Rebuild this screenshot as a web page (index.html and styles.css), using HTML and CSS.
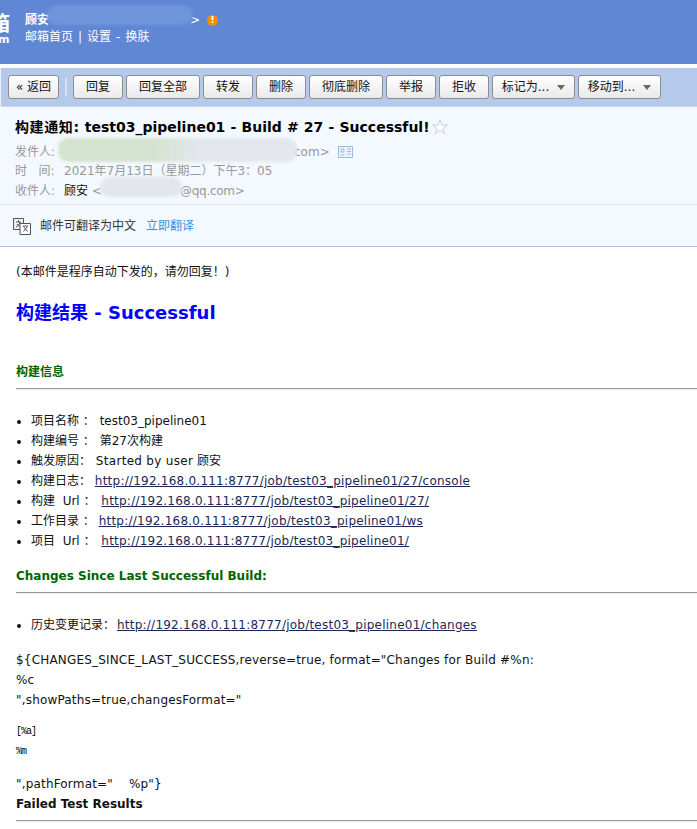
FILE: index.html
```html
<!DOCTYPE html>
<html lang="zh">
<head>
<meta charset="utf-8">
<title>构建通知</title>
<link rel="stylesheet" href="styles.css">
</head>
<body>
<header class="top">
  <div class="logo"><span class="logo-main">箱</span><span class="logo-sub">m</span></div>
  <div class="account">
    <div class="acct-line"><b class="acct-name">顾安</b><span class="acct-mail">&gt;</span>
      <span class="alert">!</span>
    </div>
    <div class="acct-links">邮箱首页<span class="pipe">|</span>设置<span class="dash">-</span>换肤</div>
    <div class="blur blur-acct"></div>
  </div>
</header>
<nav class="toolbar">
  <button class="btn back">« 返回</button>
  <span class="sep"></span>
  <button class="btn w-reply">回复</button>
  <button class="btn w-all">回复全部</button>
  <button class="btn w-reply">转发</button>
  <button class="btn w-del">删除</button>
  <button class="btn w-wipe">彻底删除</button>
  <button class="btn w-reply">举报</button>
  <button class="btn w-reply">拒收</button>
  <button class="btn w-menu">标记为...<i class="caret"></i></button>
  <button class="btn w-menu">移动到...<i class="caret"></i></button>
</nav>
<section class="mailhead">
  <div class="meta">
    <h1 class="subject"><span class="subj-text"><span class="subj-cn">构建通知:</span> test03_pipeline01 - Build # 27 - Successful!</span><svg class="star" width="16" height="16" viewBox="0 0 16 16"><path d="M8 1l2 5h5.300l-4.300 3.300 1.700 5.400L8 11.400l-4.700 3.300L5 9.300.7 6H6z" fill="#fff" stroke="#c9ced6"/></svg></h1>
    <div class="row row-first"><span class="lbl">发件人:</span><span class="from">com&gt;</span><svg class="card" width="15" height="12" viewBox="0 0 15 12"><rect x=".5" y=".5" width="14" height="11" fill="#eef4fc" stroke="#9dbbdc"/><path d="M3 3h3v3H3zM2.500 9h4M9 3h4M9 5.500h4M9 8h4" fill="none" stroke="#9dbbdc"/></svg></div>
    <div class="row"><span class="lbl">时&nbsp;&nbsp;&nbsp;间:</span><span class="time">2021年7月13日（星期二）下午3：05</span></div>
    <div class="row"><span class="lbl">收件人:</span><span class="name">顾安</span><span class="to">&lt;</span><span class="to to-mail">@qq.com&gt;</span></div>
    <div class="blur blur-from"></div>
    <div class="blur blur-to"></div>
  </div>
  <div class="translate">
    <svg width="20" height="20" viewBox="0 0 20 20" class="tr-icon"><path d="M.5 2.500h10v11H.5z" fill="#f2f2f2" stroke="#555"/><path d="M7 7.500h10.500v11H7z" fill="#fff" stroke="#555"/><path d="M3 6h5M5.500 4v2M7 6c-.5 2.500-2 4-4 5M4 8c1 1.500 2 2.300 3 2.800M10 10h5M10.500 10.500l4 5M14.500 10.500l-4 5" fill="none" stroke="#555"/></svg>
    <span>邮件可翻译为中文</span><a class="tr-link">立即翻译</a>
  </div>
</section>
<main class="body">
  <p class="notice">(本邮件是程序自动下发的，请勿回复！)</p>
  <h2 class="result">构建结果 - Successful</h2>
  <h3 class="sec sec-first">构建信息</h3>
  <hr class="rule">
  <ul class="list">
    <li>项目名称 ： <span class="val">test03_pipeline01</span></li>
    <li>构建编号 ： <span class="val">第27次构建</span></li>
    <li>触发原因： <span class="val latin">Started by user</span> 顾安</li>
    <li>构建日志： <a>http://192.168.0.111:8777/job/test03_pipeline01/27/console</a></li>
    <li class="url">构建 &nbsp;Url ： <a>http://192.168.0.111:8777/job/test03_pipeline01/27/</a></li>
    <li>工作目录 ： <a>http://192.168.0.111:8777/job/test03_pipeline01/ws</a></li>
    <li class="url">项目 &nbsp;Url ： <a>http://192.168.0.111:8777/job/test03_pipeline01/</a></li>
  </ul>
  <h3 class="sec sec-changes">Changes Since Last Successful Build:</h3>
  <hr class="rule">
  <ul class="list list-hist">
    <li class="hist">历史变更记录：<a>http://192.168.0.111:8777/job/test03_pipeline01/changes</a></li>
  </ul>
  <div class="text">${CHANGES_SINCE_LAST_SUCCESS,reverse=true, format="Changes for Build #%n:<br>%c<br>",showPaths=true,changesFormat="</div>
  <pre class="mono">[%a]
%m</pre>
  <div class="text">",pathFormat=" &nbsp; &nbsp;%p"}</div>
  <h3 class="failed">Failed Test Results</h3>
  <hr class="rule">
</main>
</body>
</html>
```
FILE: styles.css
```css
html, body { margin: 0; padding: 0; }
body {
  width: 697px;
  height: 829px;
  overflow: hidden;
  background: #fff;
  color: #111;
  font: 12px/20px "DejaVu Sans", "Noto Sans CJK SC", sans-serif;
}
.top {
  height: 64px;
  background: #5f87d3;
  display: flex;
  color: #fff;
  overflow: hidden;
}
.logo {
  width: 25px;
  flex: none;
  overflow: hidden;
  display: flex;
  flex-direction: column;
  padding-top: 12px;
  align-items: flex-start;
}
.logo-main { font: bold 20px/22px "Noto Sans CJK SC", sans-serif; margin-left: -10px; }
.logo-sub { font: bold 11px/11px "DejaVu Sans", sans-serif; margin-left: -2px; }
.account { position: relative; padding-top: 10px; }
.acct-line { display: flex; align-items: center; height: 20px; }
.acct-name { font-size: 12px; width: 165px; }
.acct-mail { width: 17px; }
.alert {
  width: 11px; height: 11px; border-radius: 50%;
  background: #f09000; color: #fff;
  font: bold 9px/11px "DejaVu Sans", sans-serif; text-align: center;
}
.acct-links { height: 20px; line-height: 19px; margin-top: -2px; white-space: nowrap; }
.pipe { margin: 0 5px; }
.dash { margin: 0 5px; }
.blur { position: absolute; filter: blur(1.5px); border-radius: 10px; }
.blur-acct { left: 22px; top: 5px; width: 146px; height: 20px; background: #6f95db; }
.toolbar {
  margin-top: 4px;
  height: 39px;
  background: #b5c9ea;
  border-left: 1px solid #e8effa;
  border-bottom: 1px solid #c8d6ec;
  box-sizing: border-box;
  display: flex;
  align-items: center;
  padding: 0 0 0 7px;
  gap: 3px;
}
.btn {
  height: 24px;
  padding: 0;
  flex: none;
  border: 1px solid #8c8c8c;
  border-radius: 3px;
  background: linear-gradient(#fff, #e9e9e9);
  font: 12px/20px "DejaVu Sans", "Noto Sans CJK SC", sans-serif;
  color: #111;
  white-space: nowrap;
}
.back { width: 51px; }
.sep { width: 2px; height: 18px; background: #d8e2f4; margin: 0 3px; }
.w-reply { width: 50px; }
.w-all { width: 74px; }
.w-del { width: 50px; }
.w-wipe { width: 74px; }
.w-menu { width: 83px; }
.caret {
  display: inline-block;
  width: 0; height: 0;
  margin-left: 8px;
  vertical-align: 1px;
  border: 4px solid transparent;
  border-top: 5px solid #666;
  border-bottom: 0;
}
.mailhead { background: #f4f8ff; border-bottom: 1px solid #a8c4e0; }
.meta { position: relative; height: 98px; padding: 9px 0 0 15px; box-sizing: border-box; border-bottom: 1px solid #dfe5ee; }
.subject {
  margin: 0;
  font: bold 14px/22px "DejaVu Sans", "Noto Sans CJK SC", sans-serif;
  height: 22px;
  display: flex;
  align-items: center;
  white-space: pre;
  color: #000;
}
.subj-text { word-spacing: .3px; }
.subj-cn { letter-spacing: .6px; }
.star { margin-left: 2px; }
.row { display: flex; align-items: center; height: 19.5px; color: #999; white-space: pre; }
.row-first { margin-top: 4px; }
.lbl { width: 49px; }
.from { margin-left: 230px; width: 35px; }
.card { margin-left: 9px; }
.name { color: #111; }
.to { margin-left: 4px; }
.to-mail { margin-left: 78px; letter-spacing: -.3px; }
.blur-from { left: 58px; top: 31px; width: 239px; height: 24px; background: linear-gradient(90deg, #d4e3d0 40%, #e4e7ee 60%); }
.blur-to { left: 100px; top: 70px; width: 82px; height: 20px; background: #e3e6ed; }
.translate { height: 41px; display: flex; align-items: center; padding-left: 13px; color: #333; }
.tr-icon { margin-right: 7px; }
.tr-link { color: #3f8fde; margin-left: 10px; }
.body { padding: 0 0 0 16px; }
.notice { margin: 15px 0 0; height: 20px; }
.result { margin: 17px 0 0; font: bold 18px/28px "DejaVu Sans", "Noto Sans CJK SC", sans-serif; color: #0000ff; }
.sec { margin: 0; font: bold 12px/20px "DejaVu Sans", "Noto Sans CJK SC", sans-serif; color: #006400; }
.sec-first { margin-top: 35px; }
.sec-changes { margin-top: 15px; }
.rule { margin: 6px 0 0; height: 0; border: 0; border-top: 1px solid #999; border-bottom: 1px solid #eee; }
.list { margin: 21px 0 0; padding: 0 0 0 15px; }
.list a { color: #1a2a55; text-decoration: underline; letter-spacing: .23px; }
.val { margin-left: 1px; }
.latin { letter-spacing: .3px; }
.url a { margin-left: 2px; }
.hist a { margin-left: 2px; }
.list-hist { margin-top: 21px; }
.text { margin-top: 15px; letter-spacing: .18px; }
.mono { margin: 12px 0 0; font: 10px/20px "Liberation Mono", "DejaVu Sans Mono", monospace; letter-spacing: -1px; color: #000; }
.mono + .text { margin-top: 12px; }
.failed { margin: 0; font: bold 12px/20px "DejaVu Sans", sans-serif; color: #111; }
.failed + .rule { margin-top: 6px; }
```
